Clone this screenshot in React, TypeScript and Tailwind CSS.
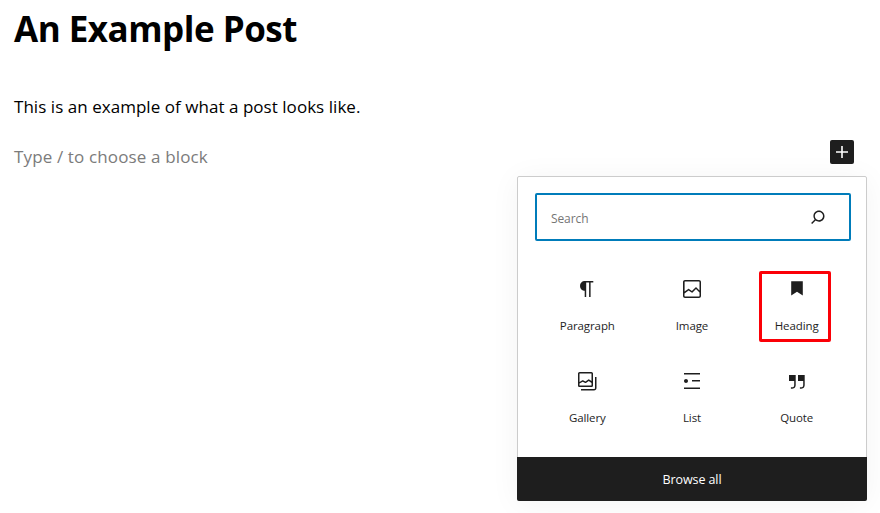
const font = "font-['Open_Sans','Noto_Sans',sans-serif]";

const icons: Record<string, string> = {
  paragraph: "M18.3 4H9.9v-.1l-.9.2c-2.3.4-4 2.4-4 4.8s1.7 4.4 4 4.8l.7.1V20h1.5V5.5h2.9V20h1.5V5.5h2.7V4z",
  image: "M19 3H5c-1.1 0-2 .9-2 2v14c0 1.1.9 2 2 2h14c1.1 0 2-.9 2-2V5c0-1.1-.9-2-2-2zM5 4.5h14c.3 0 .5.2.5.5v8.4l-3-2.9c-.3-.3-.8-.3-1 0L11.9 14 9 12c-.3-.2-.6-.2-.8 0l-3.6 2.6V5c-.1-.3.1-.5.4-.5zm14 15H5c-.3 0-.5-.2-.5-.5v-2.4l4.1-3 3 1.9c.3.2.7.2.9-.1L16 12l3.5 3.4V19c0 .3-.2.5-.5.5z",
  heading: "M6.2 4.2v14.4l5.8-3.8 5.8 3.8V4.2z",
  gallery: "M16.375 4.5H4.625a.125.125 0 0 0-.125.125v8.254l2.859-1.54a.75.75 0 0 1 .68-.016l2.384 1.142 2.89-2.074a.75.75 0 0 1 .874 0l2.313 1.66V4.625a.125.125 0 0 0-.125-.125Zm.125 9.398-2.75-1.975-2.813 2.02a.75.75 0 0 1-.76.067l-2.444-1.17L4.5 14.583v1.792c0 .069.056.125.125.125h11.75a.125.125 0 0 0 .125-.125v-2.477ZM4.625 3C3.728 3 3 3.728 3 4.625v11.75C3 17.273 3.728 18 4.625 18h11.75c.898 0 1.625-.727 1.625-1.625V4.625C18 3.728 17.273 3 16.375 3H4.625ZM20 8v11c0 .69-.31 1-.999 1H6v1.5h13.001c1.52 0 2.499-.982 2.499-2.5V8H20Z",
  list: "M4 4v1.5h16V4H4zm8 8.5h8V11h-8v1.5zM4 20h16v-1.5H4V20zm4-8c0-1.1-.9-2-2-2s-2 .9-2 2 .9 2 2 2 2-.9 2-2z",
  quote: "M13 6v6h5.2v4c0 .8-.2 1.4-.5 1.7-.6.6-1.6.6-2.5.5h-.3v1.5h.5c1 0 2.3-.1 3.3-1 .6-.6 1-1.6 1-2.8V6H13zm-9 6h5.2v4c0 .8-.2 1.4-.5 1.7-.6.6-1.6.6-2.5.5h-.3v1.5h.5c1 0 2.3-.1 3.3-1 .6-.6 1-1.6 1-2.8V6H4v6z",
  search: "M13 5c-3.3 0-6 2.7-6 6 0 1.4.5 2.7 1.3 3.7l-3.8 3.8 1.1 1.1 3.8-3.8c1 .8 2.3 1.3 3.7 1.3 3.3 0 6-2.7 6-6S16.3 5 13 5zm0 10.5c-2.5 0-4.5-2-4.5-4.5s2-4.5 4.5-4.5 4.5 2 4.5 4.5-2 4.5-4.5 4.5z",
  plus: "M18 11.2h-5.2V6h-1.6v5.2H6v1.6h5.2V18h1.6v-5.2H18z",
};

function Icon({ name, className = "fill-[#1e1e1e]" }: { name: string; className?: string }) {
  return (
    <svg viewBox="0 0 24 24" width={24} height={24} className={className}>
      <path d={icons[name]} fillRule="evenodd" />
    </svg>
  );
}

const blocks = [
  { name: "paragraph", label: "Paragraph" },
  { name: "image", label: "Image" },
  { name: "heading", label: "Heading", marked: true },
  { name: "gallery", label: "Gallery" },
  { name: "list", label: "List" },
  { name: "quote", label: "Quote" },
];

export default function App() {
  return (
    <div className={`${font} w-[880px] h-[513px] bg-white overflow-hidden text-black`}>
      <div className="pl-[14px] pr-[26px]">
        <h1 className="text-[35px] leading-[44px] font-bold h-[52px] pt-[7px] tracking-[-0.5px]">An Example Post</h1>
        <p className="mt-[43px] text-[17px] leading-[24px] tracking-[0.04px]">This is an example of what a post looks like.</p>
        <div className="mt-[21px] flex items-start justify-between h-[24px]">
          <span className="mt-[5px] text-[17px] leading-[24px] text-[#7b7b7b] tracking-[0.14px]">Type / to choose a block</span>
          <div className="w-[24px] h-[24px] rounded-[2px] bg-[#1e1e1e]">
            <Icon name="plus" className="fill-white" />
          </div>
        </div>
      </div>
      <div className="ml-[517px] mt-[12px] w-[350px] h-[325px] flex flex-col border border-[#cccccc] rounded-[2px] bg-white shadow-[0_3px_30px_rgba(25,30,35,0.05)]">
        <div className="ml-[17px] mr-[15px] mt-[16px] h-[48px] flex items-center justify-between border-2 border-[#007cba] rounded-[2px] pl-[14px] pr-[20px]">
          <span className="pt-[3px] text-[12px] text-[#757575] tracking-[-0.1px]">Search</span>
          <Icon name="search" className="fill-[#1e1e1e] w-[22px] h-[22px]" />
        </div>
        <div className="mx-[17px] mt-[30px] grid grid-cols-3 grid-rows-[72px_72px] gap-y-[20px] flex-1">
          {blocks.map((b) => (
            <div key={b.label} className="flex justify-center">
              <div className={`w-[72px] flex flex-col items-center rounded-[2px] ${b.marked ? "h-[71px] ml-[-4px] border-[3px] border-[#fb0007] pt-[3px] pl-[4px]" : "h-[72px] pt-[6px]"}`}>
                <Icon name={b.name} />
                <span className="mt-[17px] text-[11.5px] leading-[16px] text-[#1e1e1e] tracking-[-0.1px]">{b.label}</span>
              </div>
            </div>
          ))}
        </div>
        <div className="h-[44px] pt-[3px] -mx-px -mb-px bg-[#1e1e1e] rounded-b-[2px] flex items-center justify-center text-white text-[12.5px] tracking-[-0.1px]">Browse all</div>
      </div>
    </div>
  );
}
